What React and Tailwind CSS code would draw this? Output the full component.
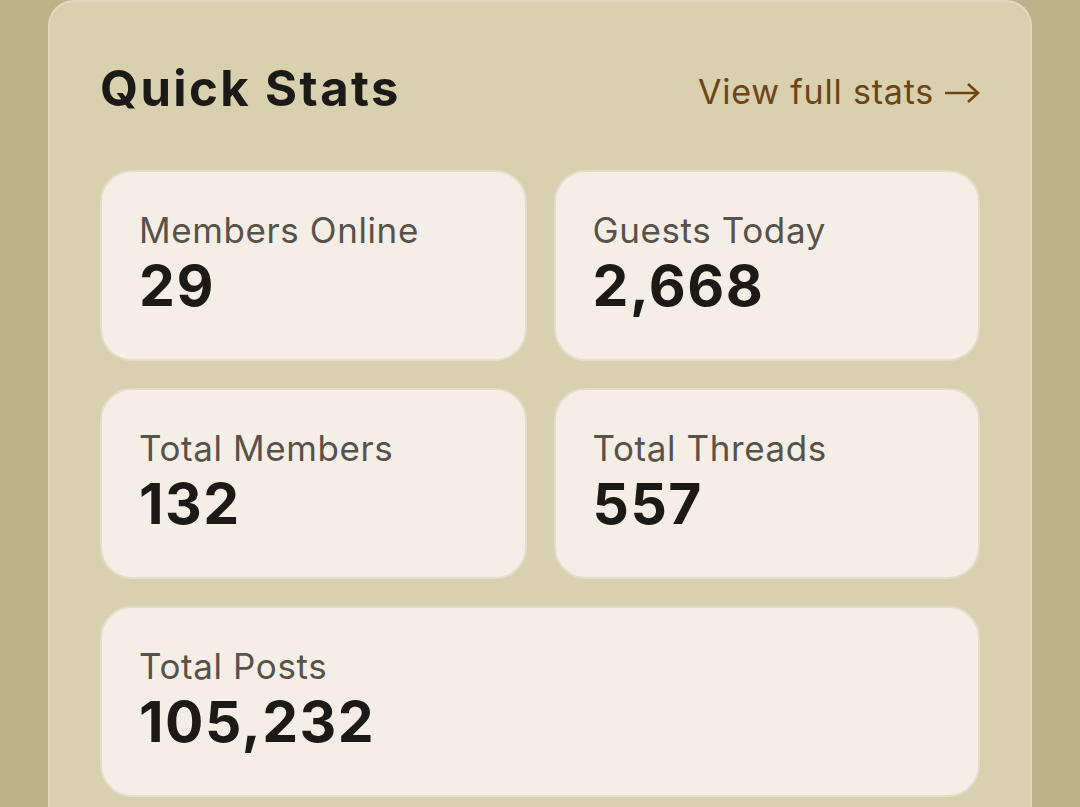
import React from "react";

const stats = [
  { label: "Members Online", value: "29" },
  { label: "Guests Today", value: "2,668" },
  { label: "Total Members", value: "132" },
  { label: "Total Threads", value: "557" },
  { label: "Total Posts", value: "105,232", wide: true },
];

function StatCard({ label, value, wide }) {
  return (
    <div
      className={
        "h-[191px] rounded-[32px] border-2 border-[#e4ddcc] bg-[#f5eee6] px-[37px] pt-[33px] " +
        (wide ? "col-span-2" : "")
      }
    >
      <div className="text-[35px] leading-[50px] tracking-[0.6px] text-[#57524a]">{label}</div>
      <div className="-mt-[3px] text-[57px] font-bold leading-[67px] tracking-[1.5px] text-[#1c1a16]">{value}</div>
    </div>
  );
}

export default function App() {
  return (
    <div
      className="min-h-[807px] w-full overflow-hidden bg-[#bdb38a]"
      style={{ fontFamily: "Inter, 'Noto Sans', sans-serif" }}
    >
      <div className="ml-[48px] w-[984px] rounded-t-[26px] border-2 border-b-0 border-[#e0d9c0] bg-[#d9d0b0] px-[50px] pt-[58px] pb-[40px]">
        <div className="flex items-baseline justify-between">
          <h2 className="text-[49px] font-bold leading-[58px] tracking-[2.4px] text-[#1c1a16]">Quick Stats</h2>
          <a className="relative -top-[2px] flex items-baseline gap-[10px] text-[34px] leading-[41px] tracking-[0.8px] text-[#6b4513]">
            <span>View full stats</span>
            <svg width="36" height="22" viewBox="0 0 36 22" className="self-center translate-y-[1px]" fill="none" stroke="#6b4513" strokeWidth="2.6" strokeLinecap="butt" strokeLinejoin="miter">
              <path d="M1 11H34" />
              <path d="M24 2L34 11L24 20" />
            </svg>
          </a>
        </div>
        <div className="mt-[52px] grid grid-cols-2 gap-[27px]">
          {stats.map((s) => (
            <StatCard key={s.label} {...s} />
          ))}
        </div>
      </div>
    </div>
  );
}
